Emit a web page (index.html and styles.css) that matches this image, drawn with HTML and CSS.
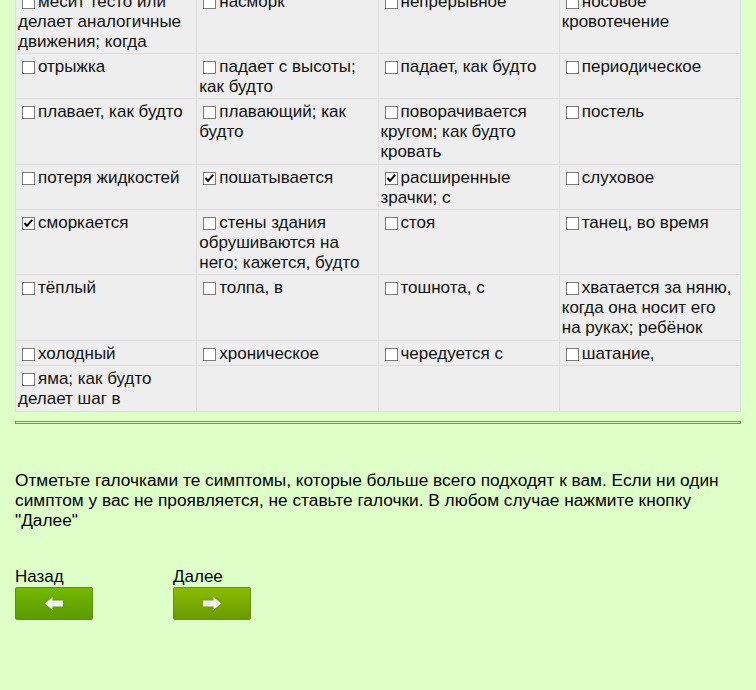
FILE: index.html
```html
<!DOCTYPE html>
<html lang="ru">
<head>
<meta charset="utf-8">
<title>Симптомы</title>
<link rel="stylesheet" href="styles.css">
</head>
<body>
<div class="page">
  <table class="symptoms">
    <tbody>
      <tr>
        <td><label><input type="checkbox" class="cb">месит тесто или делает аналогичные движения; когда</label></td>
        <td><label><input type="checkbox" class="cb">насморк</label></td>
        <td><label><input type="checkbox" class="cb">непрерывное</label></td>
        <td><label><input type="checkbox" class="cb">носовое кровотечение</label></td>
      </tr>
      <tr>
        <td><label><input type="checkbox" class="cb">отрыжка</label></td>
        <td><label><input type="checkbox" class="cb">падает с высоты; как будто</label></td>
        <td><label><input type="checkbox" class="cb">падает, как будто</label></td>
        <td><label><input type="checkbox" class="cb">периодическое</label></td>
      </tr>
      <tr>
        <td><label><input type="checkbox" class="cb">плавает, как будто</label></td>
        <td><label><input type="checkbox" class="cb">плавающий; как будто</label></td>
        <td><label><input type="checkbox" class="cb">поворачивается кругом; как будто кровать</label></td>
        <td><label><input type="checkbox" class="cb">постель</label></td>
      </tr>
      <tr>
        <td><label><input type="checkbox" class="cb">потеря жидкостей</label></td>
        <td><label><input type="checkbox" class="cb" checked>пошатывается</label></td>
        <td><label><input type="checkbox" class="cb" checked>расширенные зрачки; с</label></td>
        <td><label><input type="checkbox" class="cb">слуховое</label></td>
      </tr>
      <tr>
        <td><label><input type="checkbox" class="cb" checked>сморкается</label></td>
        <td><label><input type="checkbox" class="cb">стены здания обрушиваются на него; кажется, будто</label></td>
        <td><label><input type="checkbox" class="cb">стоя</label></td>
        <td><label><input type="checkbox" class="cb">танец, во время</label></td>
      </tr>
      <tr>
        <td><label><input type="checkbox" class="cb">тёплый</label></td>
        <td><label><input type="checkbox" class="cb">толпа, в</label></td>
        <td><label><input type="checkbox" class="cb">тошнота, с</label></td>
        <td><label><input type="checkbox" class="cb">хватается за няню, когда она носит его на руках; ребёнок</label></td>
      </tr>
      <tr>
        <td><label><input type="checkbox" class="cb">холодный</label></td>
        <td><label><input type="checkbox" class="cb">хроническое</label></td>
        <td><label><input type="checkbox" class="cb">чередуется с</label></td>
        <td><label><input type="checkbox" class="cb">шатание,</label></td>
      </tr>
      <tr>
        <td><label><input type="checkbox" class="cb">яма; как будто делает шаг в</label></td>
        <td></td>
        <td></td>
        <td></td>
      </tr>
    </tbody>
  </table>

  <hr class="divider">

  <p class="note">Отметьте галочками те симптомы, которые больше всего подходят к вам. Если ни один симптом у вас не проявляется, не ставьте галочки. В любом случае нажмите кнопку "Далее"</p>

  <div class="nav">
    <div class="nav-item">
      <div class="nav-label">Назад</div>
      <button class="btn btn-back" type="button" aria-label="Назад">
        <svg width="18" height="13" viewBox="0 0 18 13"><polygon points="0,6.5 7.5,0 7.5,3.5 18,3.5 18,9.5 7.5,9.5 7.5,13" fill="#f2f2f2"/></svg>
      </button>
    </div>
    <div class="nav-item">
      <div class="nav-label">Далее</div>
      <button class="btn btn-next" type="button" aria-label="Далее">
        <svg width="18" height="13" viewBox="0 0 18 13"><polygon points="18,6.5 10.5,0 10.5,3.5 0,3.5 0,9.5 10.5,9.5 10.5,13" fill="#f2f2f2"/></svg>
      </button>
    </div>
  </div>
</div>
</body>
</html>
```

FILE: styles.css
```css
html, body {
  margin: 0;
  padding: 0;
  background: #dfffc9;
}

body {
  font-family: "Liberation Sans", Arial, sans-serif;
  font-size: 17px;
  line-height: 20px;
  color: #000;
  height: 690px;
  overflow: hidden;
}

.page {
  padding: 0 15px;
  margin-top: -12.5px;
}

.symptoms {
  width: 100%;
  border-collapse: collapse;
  table-layout: fixed;
  background: #eeeeee;
}

.symptoms td {
  width: 25%;
  vertical-align: top;
  border: 1px solid #dcdcdc;
  padding: 3px 2px 1.4px 2px;
  color: #111;
}

.cb {
  -webkit-appearance: none;
  appearance: none;
  width: 13px;
  height: 13px;
  margin: 0 3px 0 4px;
  vertical-align: -2px;
  border: 1px solid #7a7a7a;
  background: #fff;
  box-sizing: border-box;
}

.cb:checked {
  background: #fff url("data:image/svg+xml;utf8,<svg xmlns='http://www.w3.org/2000/svg' width='11' height='11' viewBox='0 0 11 11'><polyline points='1.5,5 4,7.8 9.2,1.8' fill='none' stroke='black' stroke-width='2'/></svg>") center / 11px 11px no-repeat;
}

.divider {
  margin: 9px 0 0;
  height: 1px;
  border: 1px solid #7d877a;
  background: transparent;
}

.note {
  margin: 46px 0 0;
  font-size: 17.3px;
}

.nav {
  display: flex;
  gap: 80px;
  margin-top: 37px;
}

.nav-label {
  line-height: 20px;
}

.btn {
  display: flex;
  align-items: center;
  justify-content: center;
  width: 78px;
  height: 33px;
  padding: 0;
  border-radius: 2px;
  cursor: pointer;
}

.btn svg {
  display: block;
  filter: drop-shadow(0 0 1px rgba(0,0,0,0.15));
}

.btn-back {
  border: 1px solid #5b9400;
  background: linear-gradient(#74b900, #5b9b00);
}

.btn-next {
  border: 1px solid #6d9400;
  background: linear-gradient(#8abb00, #6a9a00);
}
```
